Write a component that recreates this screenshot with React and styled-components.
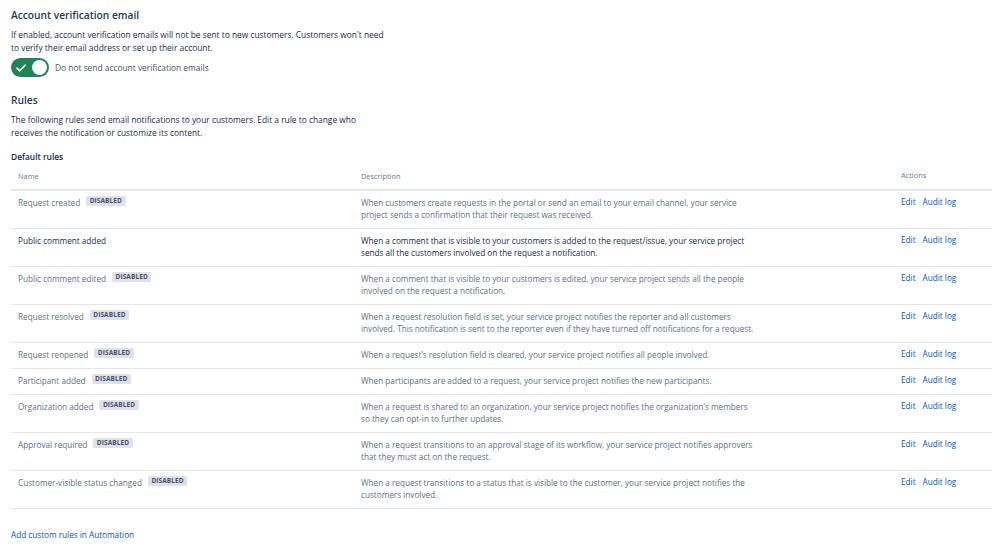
import React from "react";
import styled, { createGlobalStyle } from "styled-components";

const Global = createGlobalStyle`
  html, body { margin: 0; padding: 0; background: #fff; }
  body { font-family: "Open Sans", "Noto Sans", sans-serif; color: #172b4d; }
  * { box-sizing: border-box; }
`;

const Page = styled.div`
  width: 999px;
  height: 545px;
  padding: 8px 7px 0 11px;
  overflow: hidden;
`;

const Heading = styled.h2`
  margin: 0;
  font-size: 10.2px;
  font-weight: 600;
  line-height: 14px;
  color: #253858;
`;

const Para = styled.p`
  margin: ${(p) => p.$mt || 0}px 0 0;
  font-size: 8.4px;
  line-height: 12.5px;
  color: #172b4d;
`;

const Line = styled.span`
  display: block;
  white-space: nowrap;
`;

const ToggleRow = styled.div`
  display: flex;
  align-items: center;
  gap: 6px;
  margin-top: 4px;
`;

const Toggle = styled.div`
  width: 38px;
  height: 19px;
  border-radius: 10px;
  background: #1f845a;
  position: relative;
  display: flex;
  align-items: center;
  padding-left: 5px;
`;

const Knob = styled.span`
  position: absolute;
  right: 2px;
  top: 2px;
  width: 15px;
  height: 15px;
  border-radius: 50%;
  background: #fff;
`;

const ToggleLabel = styled.span`
  font-size: 8.4px;
  color: #44546f;
`;

const Section = styled.section`
  margin-top: ${(p) => p.$mt}px;
`;

const SubHeading = styled.h3`
  margin: 0;
  font-size: 8.4px;
  font-weight: 600;
  line-height: 12px;
  color: #172b4d;
`;

const Table = styled.div`
  margin-top: 3px;
  width: 981px;
`;

const Row = styled.div`
  display: grid;
  grid-template-columns: 350px 540px 91px;
  border-bottom: ${(p) => (p.$head ? 2 : 1)}px solid #e4e6ea;
  min-height: ${(p) => p.$h}px;
  padding: ${(p) => (p.$head ? "3px 0 0" : "5px 0 0")};
  color: ${(p) => (p.$enabled ? "#172b4d" : "#626f86")};
  font-size: 8.2px;
  line-height: 12.5px;
`;

const HeadCell = styled.div`
  font-size: 7.4px;
  color: #6b778c;
  padding-left: ${(p) => p.$pl || 0}px;
  margin-top: ${(p) => p.$mt || 0}px;
`;

const NameCell = styled.div`
  padding-left: 7px;
  display: flex;
  align-items: flex-start;
  gap: 6px;
  padding-top: 1px;
`;

const Badge = styled.span`
  font-size: 6.5px;
  font-weight: 700;
  background: #dfe1e6;
  color: #42526e;
  padding: 0 3.5px;
  border-radius: 2px;
  line-height: 10px;
  margin-top: -1px;
  letter-spacing: 0.1px;
`;

const DescCell = styled.div`
  padding-top: 1px;
  line-height: 12.2px;
`;

const Actions = styled.div`
  display: flex;
  gap: 7px;
`;

const Link = styled.a`
  color: #0052cc;
  text-decoration: none;
  font-size: 8.2px;
  cursor: pointer;
`;

const Footer = styled.div`
  margin-top: 20px;
  font-size: 8.2px;
`;

const rules = [
  {
    name: "Request created",
    disabled: true,
    desc: [
      "When customers create requests in the portal or send an email to your email channel, your service",
      "project sends a confirmation that their request was received.",
    ],
  },
  {
    name: "Public comment added",
    disabled: false,
    desc: [
      "When a comment that is visible to your customers is added to the request/issue, your service project",
      "sends all the customers involved on the request a notification.",
    ],
  },
  {
    name: "Public comment edited",
    disabled: true,
    desc: [
      "When a comment that is visible to your customers is edited, your service project sends all the people",
      "involved on the request a notification.",
    ],
  },
  {
    name: "Request resolved",
    disabled: true,
    desc: [
      "When a request resolution field is set, your service project notifies the reporter and all customers",
      "involved. This notification is sent to the reporter even if they have turned off notifications for a request.",
    ],
  },
  {
    name: "Request reopened",
    disabled: true,
    desc: ["When a request\u2019s resolution field is cleared, your service project notifies all people involved."],
  },
  {
    name: "Participant added",
    disabled: true,
    desc: ["When participants are added to a request, your service project notifies the new participants."],
  },
  {
    name: "Organization added",
    disabled: true,
    desc: [
      "When a request is shared to an organization, your service project notifies the organization\u2019s members",
      "so they can opt-in to further updates.",
    ],
  },
  {
    name: "Approval required",
    disabled: true,
    desc: [
      "When a request transitions to an approval stage of its workflow, your service project notifies approvers",
      "that they must act on the request.",
    ],
  },
  {
    name: "Customer-visible status changed",
    disabled: true,
    desc: [
      "When a request transitions to a status that is visible to the customer, your service project notifies the",
      "customers involved.",
    ],
  },
];

export default function App() {
  return (
    <>
      <Global />
      <Page>
        <Heading>Account verification email</Heading>
        <Para $mt={7}>
          <Line>If enabled, account verification emails will not be sent to new customers. Customers won't need</Line>
          <Line>to verify their email address or set up their account.</Line>
        </Para>
        <ToggleRow>
          <Toggle>
            <svg width="10" height="8" viewBox="0 0 10 8">
              <path d="M1 4.2 L3.8 6.8 L9 1.2" stroke="#fff" strokeWidth="1.6" fill="none" strokeLinecap="round" strokeLinejoin="round" />
            </svg>
            <Knob />
          </Toggle>
          <ToggleLabel>Do not send account verification emails</ToggleLabel>
        </ToggleRow>

        <Section $mt={16}>
          <Heading>Rules</Heading>
          <Para $mt={7}>
            <Line>The following rules send email notifications to your customers. Edit a rule to change who</Line>
            <Line>receives the notification or customize its content.</Line>
          </Para>
        </Section>

        <Section $mt={12}>
          <SubHeading>Default rules</SubHeading>
          <Table>
            <Row $head $h={25}>
              <HeadCell $pl={7} $mt={1}>Name</HeadCell>
              <HeadCell $mt={1}>Description</HeadCell>
              <HeadCell>Actions</HeadCell>
            </Row>
            {rules.map((r) => (
              <Row key={r.name} $enabled={!r.disabled} $h={r.desc.length > 1 ? 38 : 26}>
                <NameCell>
                  <span>{r.name}</span>
                  {r.disabled && <Badge>DISABLED</Badge>}
                </NameCell>
                <DescCell>
                  {r.desc.map((l) => (
                    <Line key={l}>{l}</Line>
                  ))}
                </DescCell>
                <Actions>
                  <Link>Edit</Link>
                  <Link>Audit log</Link>
                </Actions>
              </Row>
            ))}
          </Table>
          <Footer>
            <Link>Add custom rules in Automation</Link>
          </Footer>
        </Section>
      </Page>
    </>
  );
}
